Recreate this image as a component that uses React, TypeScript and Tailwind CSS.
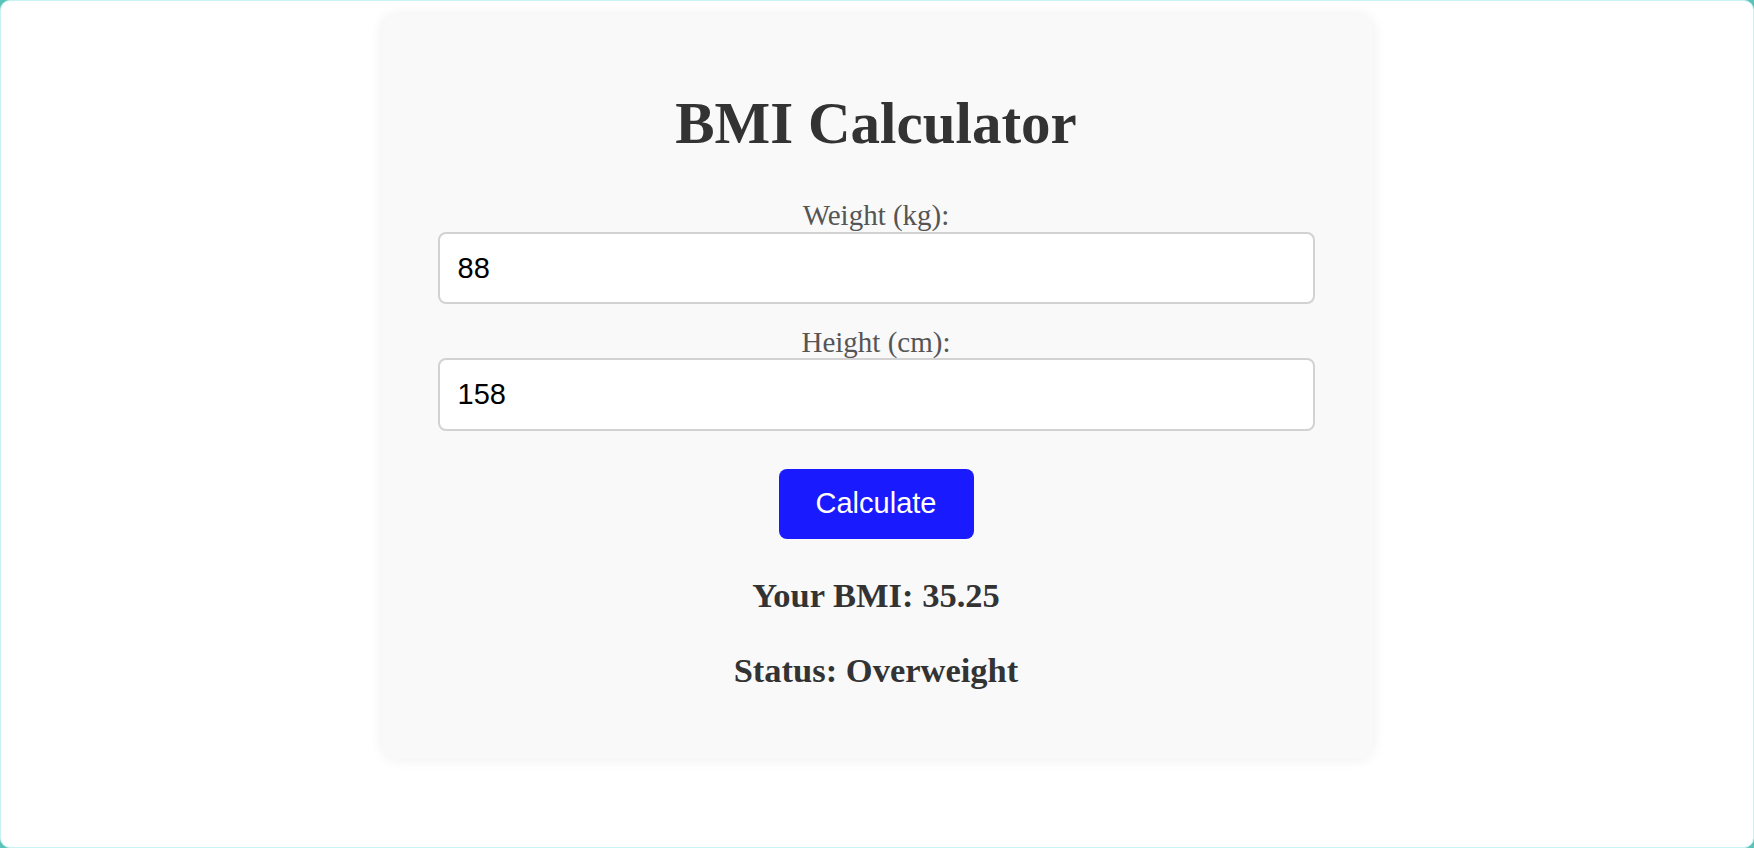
import { useState } from "react";

const serif = { fontFamily: '"Liberation Serif", "Times New Roman", serif' };
const sans = { fontFamily: '"Liberation Sans", Arial, sans-serif' };

export default function App() {
  const [weight, setWeight] = useState("88");
  const [height, setHeight] = useState("158");
  const [bmi, setBmi] = useState("35.25");
  const [status, setStatus] = useState("Overweight");

  function calculate() {
    const w = parseFloat(weight);
    const h = parseFloat(height) / 100;
    if (!w || !h) return;
    const value = w / (h * h);
    setBmi(value.toFixed(2));
    if (value < 18.5) setStatus("Underweight");
    else if (value < 25) setStatus("Normal");
    else setStatus("Overweight");
  }

  return (
    <div className="h-screen w-full bg-[#5cc3bb]">
      <div className="h-full w-full overflow-hidden rounded-[10px] border border-[#c9f3f3] bg-white">
        <div
          className="mx-auto mt-[14px] flex w-[991px] flex-col items-center rounded-[15px] bg-[#f9f9f9] pb-[69px] pl-[56px] pr-[58px] pt-[75px] shadow-[0_0_14px_rgba(0,0,0,0.07)]"
          style={serif}
        >
          <h1 className="text-[59px] font-bold leading-[66px] text-[#333333]">BMI Calculator</h1>

          <label className="mt-[43px] block text-[29px] leading-[32px] text-[#555555]">Weight (kg):</label>
          <input
            type="text"
            value={weight}
            onChange={(e) => setWeight(e.target.value)}
            className="mt-[1px] h-[72px] w-full rounded-[8px] border-2 border-[#d2d2d2] bg-white pl-[18px] text-[29px] text-black outline-none"
            style={sans}
          />

          <label className="mt-[22px] block text-[29px] leading-[32px] text-[#555555]">Height (cm):</label>
          <input
            type="text"
            value={height}
            onChange={(e) => setHeight(e.target.value)}
            className="h-[73px] w-full rounded-[8px] border-2 border-[#d2d2d2] bg-white pl-[18px] text-[29px] text-black outline-none"
            style={sans}
          />

          <button
            onClick={calculate}
            className="mt-[38px] flex h-[70px] w-[195px] items-center justify-center rounded-[8px] bg-[#1a1aff] text-[29px] text-white"
            style={sans}
          >
            Calculate
          </button>

          <p className="mt-[36px] text-[34.5px] font-bold leading-[40px] text-[#333333]">Your BMI: {bmi}</p>
          <p className="mt-[35px] text-[34.5px] font-bold leading-[40px] text-[#333333]">Status: {status}</p>
        </div>
      </div>
    </div>
  );
}
